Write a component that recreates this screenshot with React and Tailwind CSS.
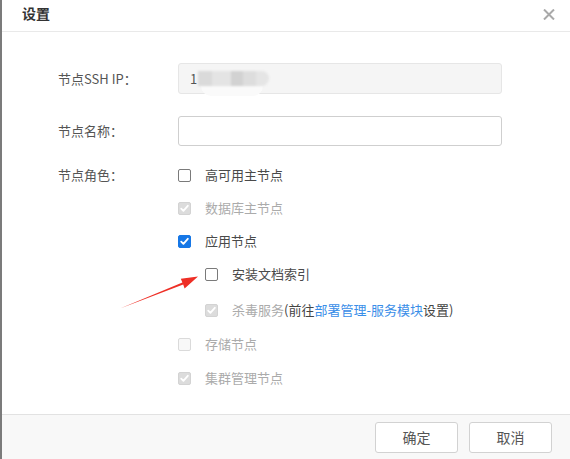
import React from "react";

function Check({ state }) {
  // state: off | on | lockedOn | lockedOff
  const base = "w-[13px] h-[13px] rounded-[2px] flex items-center justify-center shrink-0";
  if (state === "on") {
    return (
      <span className={`${base} bg-[#1677e6] border border-[#1677e6]`}>
        <Tick color="#ffffff" />
      </span>
    );
  }
  if (state === "lockedOn") {
    return (
      <span className={`${base} bg-[#dcdcdc] border border-[#d3d3d3]`}>
        <Tick color="#ffffff" />
      </span>
    );
  }
  if (state === "lockedOff") {
    return <span className={`${base} bg-[#f8f8f8] border border-[#dadada]`} />;
  }
  return <span className={`${base} bg-white border border-[#7a7a7a]`} />;
}

function Tick({ color }) {
  return (
    <svg width="11" height="11" viewBox="0 0 11 11" fill="none">
      <path d="M2.2 5.6 L4.4 7.8 L8.8 2.8" stroke={color} strokeWidth="1.8" strokeLinecap="round" strokeLinejoin="round" />
    </svg>
  );
}

function Row({ state, children, className = "", indent = false }) {
  return (
    <div className={`flex items-center h-[20px] ${indent ? "pl-[27px]" : ""} ${className}`}>
      <Check state={state} />
      <span className="ml-[14px] whitespace-nowrap">{children}</span>
    </div>
  );
}

export default function App() {
  return (
    <div
      className="relative w-[570px] h-[459px] overflow-hidden bg-white border-l-2 border-[#7b7b7b] flex flex-col text-[13px] text-[#4a4a4a]"
      style={{ fontFamily: '"Noto Sans CJK SC", "Noto Sans", sans-serif' }}
    >
      {/* header */}
      <div className="h-[32px] shrink-0 border-b border-[#e9e9e9] flex items-center justify-between pl-[20px] pr-[15px] pb-[4px]">
        <span className="text-[14px] font-bold text-[#333]">设置</span>
        <svg width="12" height="11" viewBox="0 0 12 11" className="mt-[1px]">
          <path d="M1 0.5 L11 10.5 M11 0.5 L1 10.5" stroke="#a9a9a9" strokeWidth="2" />
        </svg>
      </div>

      {/* body */}
      <div className="flex-1 pl-[56px] pt-[31px]">
        <div className="flex items-center">
          <span className="w-[120px] text-[#555]">节点SSH IP：</span>
          <div className="w-[324px] h-[31px] rounded-[3px] border border-[#e6e6e6] bg-[#f5f5f5] flex items-center pl-[11px]">
            <span className="text-[#555]">1</span>
            <div className="relative flex flex-col ml-[1px] mt-[9px]">
              <div className="flex h-[15px] w-[71px] rounded-r-full overflow-hidden blur-[1px]">
                <span className="w-[14px] bg-[#dadada]" />
                <span className="w-[19px] bg-[#e4e4e4]" />
                <span className="w-[12px] bg-[#d2d2d2]" />
                <span className="w-[13px] bg-[#dddddd]" />
                <span className="w-[13px] bg-[#e5e5e5]" />
              </div>
              <div className="ml-[3px] h-[10px] w-[62px] rounded-b-full bg-[#fafafa]" />
            </div>
          </div>
        </div>

        <div className="flex items-center mt-[22px]">
          <span className="w-[120px] text-[#555]">节点名称：</span>
          <div className="w-[324px] h-[30px] rounded-[3px] border border-[#cfcfcf] bg-white" />
        </div>

        <div className="flex mt-[19px]">
          <span className="w-[120px] h-[20px] flex items-center text-[#555]">节点角色：</span>
          <div className="flex flex-col">
            <Row state="off">高可用主节点</Row>
            <Row state="lockedOn" className="mt-[13px] text-[#ababab]">数据库主节点</Row>
            <Row state="on" className="mt-[13px]">应用节点</Row>
            <Row state="off" indent className="mt-[13px]">安装文档索引</Row>
            <Row state="lockedOn" indent className="mt-[16px]">
              <span className="text-[#ababab]">杀毒服务</span>
              <span className="text-[#444]">(前往</span>
              <span className="text-[#3a8ee8]">部署管理-服务模块</span>
              <span className="text-[#444]">设置)</span>
            </Row>
            <Row state="lockedOff" className="mt-[14px] text-[#ababab]">存储节点</Row>
            <Row state="lockedOn" className="mt-[14px] text-[#ababab]">集群管理节点</Row>
          </div>
        </div>
      </div>

      {/* footer */}
      <div className="h-[45px] shrink-0 border-t border-[#e2e2e2] bg-[#f8f8f8] flex justify-end gap-[11px] pt-[7px] pr-[18px]">
        <button className="w-[83px] h-[31px] rounded-[3px] border border-[#d2d2d2] bg-white text-[14px] text-[#555]">确定</button>
        <button className="w-[83px] h-[31px] rounded-[3px] border border-[#d2d2d2] bg-white text-[14px] text-[#555]">取消</button>
      </div>

      {/* annotation arrow */}
      <svg className="absolute left-[-2px] top-0 pointer-events-none" width="570" height="459" viewBox="0 0 570 459">
        <polygon
          points="120,308.6 183.2,284.6 184.6,288.6 198,276.6 180.8,278.8 182.4,282.4"
          fill="#ee2f26"
        />
      </svg>
    </div>
  );
}
